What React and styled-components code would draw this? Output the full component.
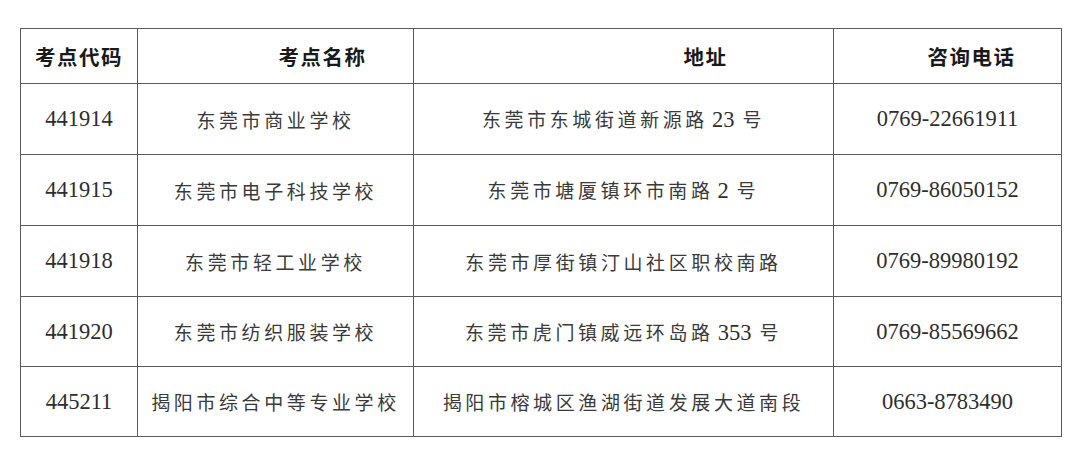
import React from 'react';
import styled, { createGlobalStyle } from 'styled-components';

const GlobalStyle = createGlobalStyle`
    html, body {
        margin: 0;
        padding: 0;
        background: #ffffff;
    }
`;

const Page = styled.div`
    width: 1080px;
    height: 456px;
    padding: 28px 0 0 20px;
    box-sizing: border-box;
    background: #ffffff;
`;

const Table = styled.table`
    border-collapse: collapse;
    table-layout: fixed;
    width: 1041px;
    border: 1.5px solid #5a5a5a;
`;

const Col = styled.col`
    width: ${(props) => props.$w}px;
`;

const HeadCell = styled.th`
    height: 54px;
    padding: 0 0 0 ${(props) => props.$shift || 0}px;
    border: 1.5px solid #5a5a5a;
    font-family: "Noto Sans CJK SC", sans-serif;
    font-weight: 700;
    font-size: 20.5px;
    letter-spacing: 1.5px;
    color: #1a1a1a;
    text-align: center;
    vertical-align: middle;
`;

const Row = styled.tr`
    height: ${(props) => props.$h}px;
`;

const Cell = styled.td`
    padding: 0;
    border: 1.5px solid #5a5a5a;
    font-family: "Liberation Serif", "Noto Sans CJK SC", serif;
    font-weight: 400;
    font-size: 19px;
    letter-spacing: ${(props) => (props.$num ? 0 : 3.6)}px;
    color: #3a3a3a;
    text-align: center;
    vertical-align: middle;
    white-space: nowrap;
`;

const Num = styled.span`
    font-family: "Liberation Serif", serif;
    font-size: 22.5px;
    letter-spacing: 0;
    color: #2e2e2e;
`;

const InlineNum = styled(Num)`
    margin: 0 8px 0 4px;
`;

const rows = [
    { code: '441914', name: '东莞市商业学校', addr: ['东莞市东城街道新源路', '23', '号'], tel: '0769-22661911', h: 71 },
    { code: '441915', name: '东莞市电子科技学校', addr: ['东莞市塘厦镇环市南路', '2', '号'], tel: '0769-86050152', h: 71 },
    { code: '441918', name: '东莞市轻工业学校', addr: ['东莞市厚街镇汀山社区职校南路'], tel: '0769-89980192', h: 71 },
    { code: '441920', name: '东莞市纺织服装学校', addr: ['东莞市虎门镇威远环岛路', '353', '号'], tel: '0769-85569662', h: 70 },
    { code: '445211', name: '揭阳市综合中等专业学校', addr: ['揭阳市榕城区渔湖街道发展大道南段'], tel: '0663-8783490', h: 70 }
];

function Address({ parts }) {
    if (parts.length === 1) return parts[0];
    return (
        <>
            {parts[0]}
            <InlineNum>{parts[1]}</InlineNum>
            {parts[2]}
        </>
    );
}

export default function App() {
    return (
        <Page>
            <GlobalStyle />
            <Table>
                <colgroup>
                    <Col $w={117} />
                    <Col $w={276} />
                    <Col $w={420} />
                    <Col $w={228} />
                </colgroup>
                <thead>
                    <tr>
                        <HeadCell>考点代码</HeadCell>
                        <HeadCell $shift={94}>考点名称</HeadCell>
                        <HeadCell $shift={164}>地址</HeadCell>
                        <HeadCell $shift={48}>咨询电话</HeadCell>
                    </tr>
                </thead>
                <tbody>
                    {rows.map((r) => (
                        <Row key={r.code} $h={r.h}>
                            <Cell $num>
                                <Num>{r.code}</Num>
                            </Cell>
                            <Cell>{r.name}</Cell>
                            <Cell>
                                <Address parts={r.addr} />
                            </Cell>
                            <Cell $num>
                                <Num>{r.tel}</Num>
                            </Cell>
                        </Row>
                    ))}
                </tbody>
            </Table>
        </Page>
    );
}
